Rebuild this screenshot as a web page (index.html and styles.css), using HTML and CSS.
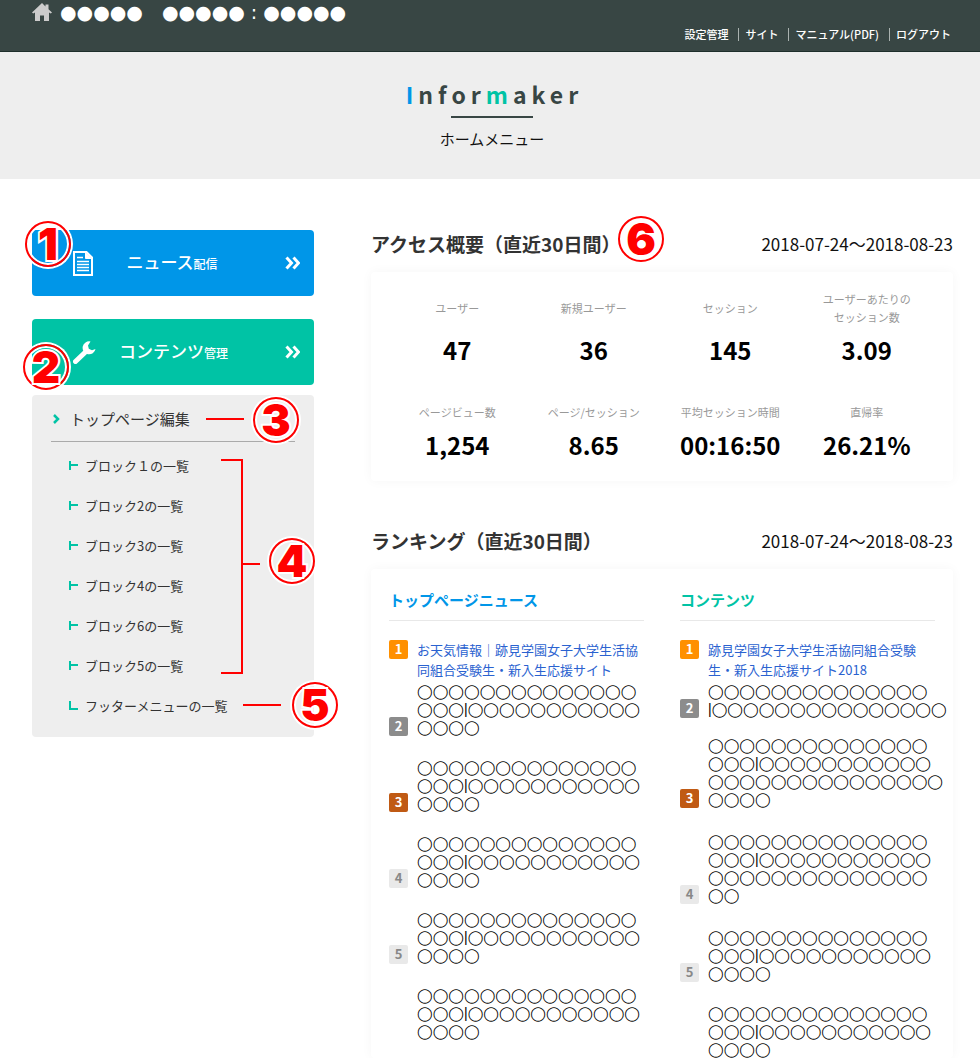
FILE: index.html
```
<!DOCTYPE html>
<html lang="ja">
<head>
    <meta charset="UTF-8">
    <meta name="viewport" content="width=device-width, initial-scale=1.0">
    <title>Informaker ホームメニュー</title>
    <link rel="stylesheet" href="styles.css">
</head>
<body>
    <header class="topbar">
        <div class="site-name">
            <svg class="home-icon" width="20" height="18" viewBox="0 0 20 18" aria-hidden="true">
                <path d="M10 0 0 9.500l1.200 1L3 9.600V18h5v-5.500h4V18h5V9.600l1.800.9 1.200-1L16.500 6.200V1.500h-3v1.900z"/>
            </svg>
            <span>●●●●●　●●●●● : ●●●●●</span>
        </div>
        <nav class="topnav">
            <a href="#">設定管理</a>
            <a href="#">サイト</a>
            <a href="#">マニュアル(PDF)</a>
            <a href="#">ログアウト</a>
        </nav>
    </header>

    <div class="hero">
        <div class="logo"><span class="logo-blue">I</span>nfor<span class="logo-green">m</span>aker</div>
        <h1>ホームメニュー</h1>
    </div>

    <main class="main">
        <aside class="sidebar">
            <a href="#" class="menu-button blue">
                <svg class="menu-icon" width="20" height="25" viewBox="0 0 20 25" aria-hidden="true">
                    <path d="M1 1h12.500L19 6.500V24H1z" fill="none" stroke="#fff" stroke-width="2"/>
                    <path d="M12.500 1v6.500H19" fill="#fff" stroke="#fff"/>
                    <path d="M4 6.500h6M4 10.500h12M4 13.500h12M4 16.500h12M4 19.500h12" stroke="#fff" stroke-width="1.600"/>
                </svg>
                <span class="menu-label">ニュース<small>配信</small></span>
                <svg class="menu-arrow" width="15" height="14" viewBox="0 0 15 14" aria-hidden="true">
                    <path d="m1.500 1.500 5 5.500-5 5.500M8.500 1.500l5 5.500-5 5.500"/>
                </svg>
                <span class="callout">1</span>
            </a>

            <a href="#" class="menu-button green">
                <svg class="menu-icon" width="23" height="23" viewBox="0 0 23 23" aria-hidden="true">
                    <path d="M2.500 20.500 13 10.500" stroke="#fff" stroke-width="5" stroke-linecap="round"/>
                    <path d="M17.500.5a6.500 6.500 0 1 0 5 7.500l-3.500 1.200-3.200-1.400-.8-3.300z" fill="#fff"/>
                </svg>
                <span class="menu-label">コンテンツ<small>管理</small></span>
                <svg class="menu-arrow" width="15" height="14" viewBox="0 0 15 14" aria-hidden="true">
                    <path d="m1.500 1.500 5 5.500-5 5.500M8.500 1.500l5 5.500-5 5.500"/>
                </svg>
                <span class="callout">2</span>
            </a>

            <div class="submenu">
                <div class="submenu-head">
                    <svg width="7" height="10" viewBox="0 0 7 10" aria-hidden="true">
                        <path d="m1 1 4 4-4 4" fill="none" stroke="#00c3a5" stroke-width="2.500"/>
                    </svg>
                    <a href="#">トップページ編集</a>
                    <span class="line"></span>
                    <span class="callout">3</span>
                </div>
                <ul class="block-list">
                    <li><a href="#">ブロック１の一覧</a></li>
                    <li><a href="#">ブロック2の一覧</a></li>
                    <li><a href="#">ブロック3の一覧</a></li>
                    <li><a href="#">ブロック4の一覧</a></li>
                    <li><a href="#">ブロック6の一覧</a></li>
                    <li><a href="#">ブロック5の一覧</a></li>
                    <li class="last">
                        <a href="#">フッターメニューの一覧</a>
                        <span class="line"></span>
                        <span class="callout">5</span>
                    </li>
                </ul>
                <span class="bracket"></span>
                <span class="callout callout-group">4</span>
            </div>
        </aside>

        <div class="content">
            <section>
                <div class="section-head">
                    <h2>アクセス概要（直近30日間）<span class="callout">6</span></h2>
                    <span class="period">2018-07-24〜2018-08-23</span>
                </div>
                <dl class="card stats">
                    <div class="stat"><dt>ユーザー</dt><dd>47</dd></div>
                    <div class="stat"><dt>新規ユーザー</dt><dd>36</dd></div>
                    <div class="stat"><dt>セッション</dt><dd>145</dd></div>
                    <div class="stat"><dt>ユーザーあたりの<br>セッション数</dt><dd>3.09</dd></div>
                    <div class="stat"><dt>ページビュー数</dt><dd>1,254</dd></div>
                    <div class="stat"><dt>ページ/セッション</dt><dd>8.65</dd></div>
                    <div class="stat"><dt>平均セッション時間</dt><dd>00:16:50</dd></div>
                    <div class="stat"><dt>直帰率</dt><dd>26.21%</dd></div>
                </dl>
            </section>

            <section>
                <div class="section-head">
                    <h2>ランキング（直近30日間）</h2>
                    <span class="period">2018-07-24〜2018-08-23</span>
                </div>
                <div class="card ranking">
                    <div class="rank-column">
                        <h3 class="text-blue">トップページニュース</h3>
                        <ol class="rank-list">
                            <li class="first"><span class="badge gold">1</span><a href="#">お天気情報｜跡見学園女子大学生活協同組合受験生・新入生応援サイト</a></li>
                            <li><span class="badge silver">2</span><span class="masked">◯◯◯◯◯◯◯◯◯◯◯◯◯◯<br>◯◯◯|◯◯◯◯◯◯◯◯◯◯◯<br>◯◯◯◯</span></li>
                            <li><span class="badge bronze">3</span><span class="masked">◯◯◯◯◯◯◯◯◯◯◯◯◯◯<br>◯◯◯|◯◯◯◯◯◯◯◯◯◯◯<br>◯◯◯◯</span></li>
                            <li><span class="badge">4</span><span class="masked">◯◯◯◯◯◯◯◯◯◯◯◯◯◯<br>◯◯◯|◯◯◯◯◯◯◯◯◯◯◯<br>◯◯◯◯</span></li>
                            <li><span class="badge">5</span><span class="masked">◯◯◯◯◯◯◯◯◯◯◯◯◯◯<br>◯◯◯|◯◯◯◯◯◯◯◯◯◯◯<br>◯◯◯◯</span></li>
                            <li class="unranked"><span class="masked">◯◯◯◯◯◯◯◯◯◯◯◯◯◯<br>◯◯◯|◯◯◯◯◯◯◯◯◯◯◯<br>◯◯◯◯</span></li>
                        </ol>
                    </div>
                    <div class="rank-column">
                        <h3 class="text-green">コンテンツ</h3>
                        <ol class="rank-list">
                            <li class="first"><span class="badge gold">1</span><a href="#">跡見学園女子大学生活協同組合受験生・新入生応援サイト2018</a></li>
                            <li class="short"><span class="badge silver">2</span><span class="masked">◯◯◯◯◯◯◯◯◯◯◯◯◯◯<br>|◯◯◯◯◯◯◯◯◯◯◯◯◯◯◯</span></li>
                            <li class="tall"><span class="badge bronze">3</span><span class="masked">◯◯◯◯◯◯◯◯◯◯◯◯◯◯<br>◯◯◯|◯◯◯◯◯◯◯◯◯◯◯<br>◯◯◯◯◯◯◯◯◯◯◯◯◯◯◯<br>◯◯◯◯</span></li>
                            <li class="tall"><span class="badge">4</span><span class="masked">◯◯◯◯◯◯◯◯◯◯◯◯◯◯<br>◯◯◯|◯◯◯◯◯◯◯◯◯◯◯<br>◯◯◯◯◯◯◯◯◯◯◯◯◯◯<br>◯◯</span></li>
                            <li><span class="badge">5</span><span class="masked">◯◯◯◯◯◯◯◯◯◯◯◯◯◯<br>◯◯◯|◯◯◯◯◯◯◯◯◯◯◯<br>◯◯◯◯</span></li>
                            <li class="unranked"><span class="masked">◯◯◯◯◯◯◯◯◯◯◯◯◯◯<br>◯◯◯|◯◯◯◯◯◯◯◯◯◯◯<br>◯◯◯◯</span></li>
                        </ol>
                    </div>
                </div>
            </section>
        </div>
    </main>
</body>
</html>
```
FILE: styles.css
```
* {
    box-sizing: border-box;
}

body {
    margin: 0;
    background-color: #fff;
    color: #333;
    font-family: "Noto Sans CJK JP", sans-serif;
    font-size: 13px;
}

a {
    color: inherit;
    text-decoration: none;
}

h1, h2, h3, ul, ol, dl, dd {
    margin: 0;
    padding: 0;
}

ul, ol {
    list-style: none;
}

/* top bar */
.topbar {
    display: flex;
    justify-content: space-between;
    padding: 0 29px 0 32px;
    background-color: #384644;
    border-bottom: 1px solid #1d2e2b;
}

.site-name {
    display: flex;
    align-items: center;
    gap: 8px;
    height: 24px;
    color: #fff;
    font-family: "DejaVu Sans", "Noto Sans CJK JP", sans-serif;
    font-size: 19px;
    line-height: 24px;
    white-space: nowrap;
}

.home-icon {
    fill: #ccc;
}

.topnav {
    display: flex;
    align-items: center;
    padding: 26px 0 8px;
    color: #fff;
    font-size: 11px;
    font-weight: 500;
    line-height: 17px;
    white-space: nowrap;
}

.topnav a + a {
    margin-left: 10px;
    padding-left: 6px;
    border-left: 1px solid #aab2b0;
    line-height: 13px;
}

/* logo area */
.hero {
    display: flex;
    flex-direction: column;
    align-items: center;
    padding: 27px 0 28px 4px;
    background-color: #eee;
}

.logo {
    padding-left: 5px;
    color: #384644;
    font-size: 23px;
    font-weight: 700;
    line-height: 30px;
    letter-spacing: 5px;
}

.logo-blue {
    color: #0096e8;
}

.logo-green {
    color: #00c3a5;
}

.hero h1 {
    color: #111;
    font-size: 15px;
    font-weight: 400;
    line-height: 24px;
}

.hero h1::before {
    content: "";
    display: block;
    width: 82px;
    height: 2px;
    margin: 7px auto 9px;
    background-color: #384644;
}

.main {
    display: grid;
    grid-template-columns: 282px 1fr;
    gap: 57px;
    padding: 51px 27px 0 32px;
}

/* numbered callouts */
.callout {
    position: absolute;
    display: flex;
    align-items: center;
    justify-content: center;
    width: 46px;
    height: 46px;
    border: 2px solid #f00;
    border-radius: 50%;
    box-shadow: 0 0 0 2px #fff, inset 0 0 0 2px #fff;
    color: #f00;
    font-family: Inter, sans-serif;
    font-size: 44px;
    font-weight: 900;
    line-height: 44px;
    -webkit-text-stroke: 4px #fff;
    paint-order: stroke fill;
}

.line {
    width: 38px;
    height: 2px;
    background-color: #f00;
}

/* sidebar */
.menu-button {
    position: relative;
    display: flex;
    align-items: center;
    height: 66px;
    margin-bottom: 23px;
    padding: 0 14px 0 41px;
    border-radius: 4px;
    color: #fff;
}

.menu-button.blue {
    background-color: #0096e8;
}

.menu-button.green {
    margin-bottom: 10px;
    background-color: #00c3a5;
}

.menu-label {
    flex: 1;
    padding-right: 34px;
    font-size: 17px;
    font-weight: 500;
    line-height: 24px;
    text-align: center;
}

.menu-label small {
    font-size: 12px;
}

.menu-arrow {
    fill: none;
    stroke: #fff;
    stroke-width: 3;
}

.menu-button .callout {
    top: -9px;
    left: -7px;
}

.menu-button.green .callout {
    top: 25px;
    left: -9px;
}

.submenu {
    position: relative;
    padding: 4px 19px 12px;
    border-radius: 4px;
    background-color: #eee;
}

.submenu-head {
    position: relative;
    display: flex;
    align-items: center;
    height: 43px;
    padding: 0 0 3px 2px;
    border-bottom: 1px solid #aaa;
    font-size: 15px;
}

.submenu-head a {
    margin: 0 16px 0 10px;
}

.submenu-head .callout {
    top: -2px;
    left: 202px;
}

.block-list {
    padding: 3px 0 0 18px;
}

.block-list li {
    position: relative;
    display: flex;
    align-items: center;
    height: 40px;
}

.block-list li::before {
    content: "";
    width: 7px;
    height: 9px;
    margin-right: 7px;
    border-left: 2px solid #00c3a5;
    background: linear-gradient(#00c3a5, #00c3a5) center / 100% 2px no-repeat;
}

.block-list .last::before {
    background-position: bottom;
}

.block-list .line {
    margin-left: 16px;
}

.block-list .callout {
    left: 223px;
}

.bracket {
    position: absolute;
    top: 64px;
    left: 189px;
    width: 22px;
    height: 215px;
    border: 2px solid #f00;
    border-left: 0;
}

.bracket::after {
    content: "";
    position: absolute;
    top: 102px;
    left: 22px;
    width: 17px;
    height: 2px;
    background-color: #f00;
}

.callout-group {
    top: 143px;
    left: 237px;
}

/* content */
.section-head {
    display: flex;
    align-items: center;
    justify-content: space-between;
    height: 28px;
    margin-bottom: 14px;
}

.section-head h2 {
    position: relative;
    font-size: 19px;
    font-weight: 700;
    line-height: 28px;
}

.section-head .callout {
    top: -14px;
    left: 247px;
}

.period {
    color: #111;
    font-size: 17px;
    line-height: 28px;
}

.card {
    padding: 18px;
    border-radius: 4px;
    box-shadow: 0 0 12px rgba(0, 0, 0, 0.04);
}

.stats {
    display: grid;
    grid-template-columns: repeat(4, 1fr);
    row-gap: 37px;
    margin-bottom: 46px;
    padding-bottom: 20px;
}

.stat {
    display: flex;
    flex-direction: column;
    justify-content: flex-end;
    text-align: center;
}

.stat dt {
    display: flex;
    flex-grow: 1;
    align-items: center;
    justify-content: center;
    color: #999;
    font-size: 11px;
    line-height: 18px;
}

.stat dd {
    margin-top: 8px;
    color: #000;
    font-size: 24px;
    font-weight: 700;
    line-height: 32px;
}

.ranking {
    display: grid;
    grid-template-columns: 1fr 1fr;
    gap: 36px;
    padding-bottom: 0;
}

.rank-column {
    min-width: 0;
}

.rank-column h3 {
    height: 34px;
    margin-bottom: 19px;
    border-bottom: 1px solid #e8e8e8;
    font-size: 15px;
    line-height: 26px;
}

.text-blue {
    color: #0096e8;
}

.text-green {
    color: #00c3a5;
}

.rank-list li {
    display: flex;
    align-items: flex-end;
    gap: 9px;
    margin-bottom: 22px;
}

.rank-list .first {
    align-items: flex-start;
    margin-bottom: 2px;
    color: #2a62d0;
    line-height: 20px;
}

.rank-list .short {
    margin-bottom: 18px;
}

.rank-list .tall {
    margin-bottom: 24px;
}

.rank-list .unranked {
    margin-bottom: 0;
    padding-left: 28px;
}

.badge {
    flex: none;
    width: 19px;
    height: 19px;
    border-radius: 2px;
    background-color: #e9e9e9;
    color: #888;
    font-size: 13px;
    font-weight: 700;
    line-height: 18px;
    text-align: center;
}

.badge.gold {
    background-color: #ff9000;
    color: #fff;
}

.badge.silver {
    background-color: #8c8c8c;
    color: #fff;
}

.badge.bronze {
    background-color: #c05a14;
    color: #fff;
}

.masked {
    color: #000;
    font-family: "Liberation Sans", "DejaVu Sans", sans-serif;
    font-size: 14px;
    line-height: 18px;
    white-space: nowrap;
}

@media (max-width: 800px) {
    .main {
        grid-template-columns: 1fr;
    }
}
```
